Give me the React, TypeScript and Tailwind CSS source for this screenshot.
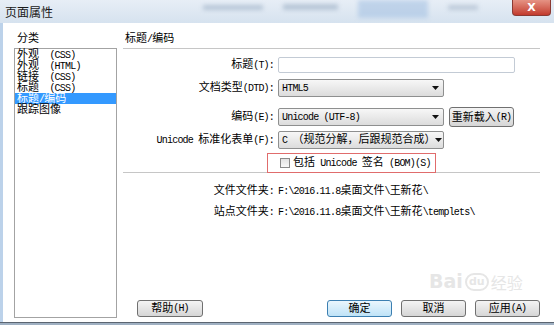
import React from 'react'

const font = "font-['Liberation_Serif','Noto_Sans_CJK_SC',serif]"

const categories = ['外观  (CSS)', '外观  (HTML)', '链接  (CSS)', '标题  (CSS)', '标题/编码', '跟踪图像']

// SimSun-style text: CJK at full size, Latin runs in a narrow mono face
function T({ s }: { s: string }) {
  const parts = s.split(/([\u3000-\u9fff\uff00-\uffef]+)/).filter(Boolean)
  return (
    <>
      {parts.map((p, i) =>
        /[\u3000-\u9fff\uff00-\uffef]/.test(p) ? (
          <span key={i} className="inline-block leading-[11px]">{p}</span>
        ) : (
          <span key={i} className="inline-block leading-[11px] font-['Liberation_Mono',monospace] text-[10px] tracking-[-0.8px] whitespace-pre">
            {p}
          </span>
        )
      )}
    </>
  )
}

function Arrow() {
  return (
    <svg width="7" height="4" viewBox="0 0 7 4" className="shrink-0">
      <path d="M0 0 H7 L3.5 4 Z" fill="#111" />
    </svg>
  )
}

function Select({ value }: { value: string }) {
  return (
    <div className="w-[166px] h-[18px] flex items-center pl-[3px] pr-[4px] border border-[#8e8f8f] rounded-[2px] bg-linear-to-b from-[#f7f7f7] to-[#dcdcdc]">
      <span className="flex-1 whitespace-nowrap">
        <T s={value} />
      </span>
      <Arrow />
    </div>
  )
}

function Btn({ label, primary }: { label: string; primary?: boolean }) {
  return (
    <div
      className={
        primary
          ? 'w-[65px] h-[17px] flex items-center justify-center rounded-[3px] border border-[#3c7fb1] bg-linear-to-b from-[#eaf6fd] to-[#bfe3f7]'
          : 'w-[65px] h-[17px] flex items-center justify-center rounded-[3px] border border-[#707070] bg-linear-to-b from-[#f4f4f4] to-[#d6d6d6]'
      }
    >
      <T s={label} />
    </div>
  )
}

function Row({ label, children, className }: { label: string; children: React.ReactNode; className: string }) {
  return (
    <div className={'flex items-center ' + className}>
      <div className="w-[151px] text-right whitespace-nowrap">
        <T s={label} />
      </div>
      <div className="ml-[4px] flex items-center">{children}</div>
    </div>
  )
}

export default function App() {
  return (
    <div className={`w-[554px] h-[325px] overflow-hidden relative flex flex-col bg-white text-[11px] leading-[11px] text-black ${font}`}>
      {/* title bar */}
      <div className="h-[23px] shrink-0 flex items-start bg-linear-to-b from-[#e7eef6] to-[#d6e2ef]">
        <span className="pl-[5px] pt-[6px] text-[12px] leading-[12px] text-[#1a1a1a] font-['Noto_Sans_CJK_SC',sans-serif]">页面属性</span>
        <div className="flex-1 flex items-start pl-[150px] pt-[2px] gap-[20px] opacity-50">
          <div className="w-[60px] h-[5px] mt-[3px] bg-[#8ea3bb] blur-[2px]" />
          <div className="w-[55px] h-[6px] mt-[2px] bg-[#8ea3bb] blur-[2px]" />
          <div className="w-[70px] h-[18px] -mt-[2px] bg-[#9cbbe0] blur-[2px]" />
          <div className="w-[30px] h-[5px] mt-[3px] bg-[#9aabc0] blur-[2px]" />
        </div>
        <div className="w-[39px] h-[16px] mr-[3px] flex items-center justify-center rounded-b-[4px] border border-t-0 border-[#8b3a33] bg-linear-to-b from-[#e59284] to-[#c2392d] text-white text-[11px] font-bold font-['DejaVu_Sans',sans-serif]">
          X
        </div>
      </div>

      {/* body */}
      <div className="flex-1 flex border-l-[3px] border-[#bcd2ea] pl-[11px] pr-[14px] pt-[10px] pb-[4px]">
        {/* categories */}
        <div className="w-[103px] flex flex-col">
          <div className="pl-[3px] h-[11px]">分类</div>
          <div className="mt-[4px] flex-1 border border-[#a3a3a3]">
            {categories.map((c) => (
              <div
                key={c}
                className={c === '标题/编码' ? 'h-[11px] pl-[2px] bg-[#3399ff] text-white whitespace-nowrap' : 'h-[11px] pl-[2px] whitespace-nowrap'}
              >
                <T s={c} />
              </div>
            ))}
          </div>
        </div>

        {/* settings */}
        <div className="ml-[6px] flex-1 flex flex-col">
          <div className="pl-[2px] h-[15px]">
            <T s="标题/编码" />
          </div>
          <div className="h-px bg-[#c6c6c6]" />

          <Row label="标题(T):" className="mt-[8px] h-[16px]">
            <div className="w-[237px] h-[16px] border border-[#c3cbd5] rounded-[2px] bg-white" />
          </Row>
          <Row label="文档类型(DTD):" className="mt-[6px] h-[18px]">
            <Select value="HTML5" />
          </Row>
          <Row label="编码(E):" className="mt-[10px] h-[20px]">
            <Select value="Unicode (UTF-8)" />
            <div className="ml-[5px] w-[65px] h-[20px] flex items-center justify-center rounded-[3px] border border-[#707070] bg-linear-to-b from-[#f4f4f4] to-[#d6d6d6] whitespace-nowrap">
              <T s="重新载入(R)" />
            </div>
          </Row>
          <Row label="Unicode 标准化表单(F):" className="mt-[4px] h-[18px]">
            <Select value="C （规范分解，后跟规范合成）" />
          </Row>
          <div className="mt-[7px] h-[14px] flex items-center pl-[157px]">
            <div className="w-[10px] h-[10px] border border-[#8a8a8a] bg-linear-to-b from-[#e2e2e2] to-[#f8f8f8]" />
            <span className="ml-[3px] whitespace-nowrap">
              <T s="包括 Unicode 签名 (BOM)(S)" />
            </span>
          </div>
          <div className="mt-[2px] h-px bg-[#c6c6c6]" />

          <Row label="文件文件夹:" className="mt-[12px] h-[11px]">
            <span className="whitespace-nowrap">
              <T s="F:\2016.11.8桌面文件\王新花\" />
            </span>
          </Row>
          <Row label="站点文件夹:" className="mt-[10px] h-[11px]">
            <span className="whitespace-nowrap">
              <T s="F:\2016.11.8桌面文件\王新花\templets\" />
            </span>
          </Row>

          <div className="mt-auto mb-[1px] flex items-center pl-[14px]">
            <div className="w-[66px] h-[17px] flex items-center justify-center rounded-[3px] border border-[#707070] bg-linear-to-b from-[#f4f4f4] to-[#d6d6d6]">
              <T s="帮助(H)" />
            </div>
            <div className="ml-auto flex gap-[9px]">
              <Btn label="确定" primary />
              <Btn label="取消" />
              <Btn label="应用(A)" />
            </div>
          </div>
        </div>
      </div>

      {/* bottom frame */}
      <div className="h-[3px] shrink-0 border-t border-[#5b6571] bg-[#9fb0c2]" />

      {/* red annotation */}
      <div className="absolute left-[267px] top-[153px] w-[169px] h-[20px] border border-[#e06c6c]" />

      {/* watermark */}
      <div className="absolute left-[429px] top-[272px] flex items-end gap-[2px] text-[#e6e6e6] font-['DejaVu_Sans',sans-serif] pointer-events-none">
        <span className="text-[19px] leading-[19px] font-bold">Bai</span>
        <span className="w-[24px] h-[18px] rounded-full border-2 border-[#e6e6e6] text-[11px] leading-[14px] font-bold text-center">du</span>
        <span className="text-[16px] leading-[18px] font-['Noto_Sans_CJK_SC',sans-serif]">经验</span>
      </div>
    </div>
  )
}
